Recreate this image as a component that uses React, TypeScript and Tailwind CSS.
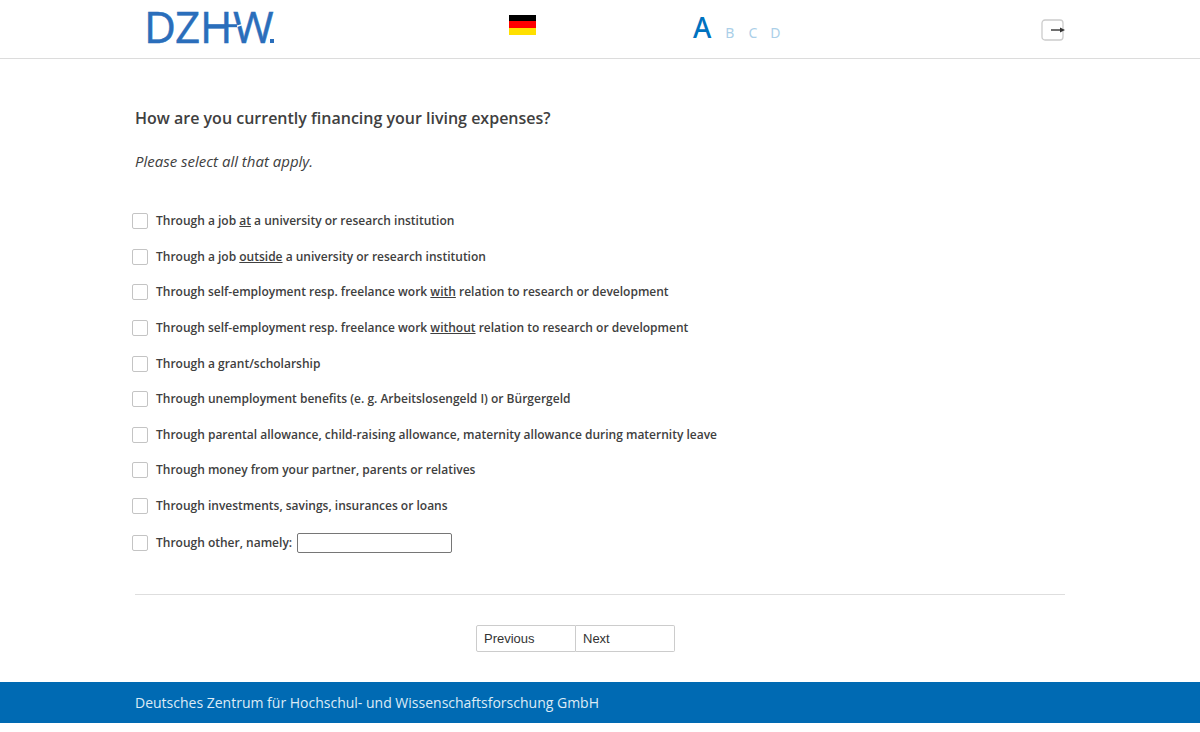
import type { ReactNode } from "react";

const options: { id: string; label: ReactNode }[] = [
  { id: "job-at", label: <>Through a job <u>at</u> a university or research institution</> },
  { id: "job-outside", label: <>Through a job <u>outside</u> a university or research institution</> },
  { id: "self-with", label: <>Through self-employment resp. freelance work <u>with</u> relation to research or development</> },
  { id: "self-without", label: <>Through self-employment resp. freelance work <u>without</u> relation to research or development</> },
  { id: "grant", label: "Through a grant/scholarship" },
  { id: "unemployment", label: "Through unemployment benefits (e. g. Arbeitslosengeld I) or Bürgergeld" },
  { id: "parental", label: "Through parental allowance, child-raising allowance, maternity allowance during maternity leave" },
  { id: "relatives", label: "Through money from your partner, parents or relatives" },
  { id: "investments", label: "Through investments, savings, insurances or loans" },
];

const checkboxClass =
  "h-4 w-4 shrink-0 appearance-none rounded-xs border border-[#c4c4c4] bg-white checked:bg-[#006ab3]";

function Logo() {
  return (
    <svg viewBox="0 0 134 58" className="h-[58px] w-[134px] overflow-visible" role="img" aria-label="DZHW">
      <g fill="#2a6ebb" stroke="#2a6ebb" strokeWidth="0.5" fontFamily="Open Sans, sans-serif" fontSize="44">
        <text x="1" y="43">D</text>
        <text x="32" y="43">Z</text>
        <text x="57" y="43">H</text>
        <text x="90" y="43">W</text>
      </g>
      <rect x="127" y="39" width="4" height="4" fill="#2a6ebb" />
      {/* crossbar running from the H into the W */}
      <path d="M64 25.7h30" stroke="#2a6ebb" strokeWidth="3" />
      <path d="M94 26.2l6-1.8" stroke="#fff" strokeWidth="1.5" />
    </svg>
  );
}

function Option({ id, label }: { id: string; label: ReactNode }) {
  return (
    <li className="flex h-5 items-center gap-2">
      <input id={id} type="checkbox" className={checkboxClass} />
      <label htmlFor={id}>{label}</label>
    </li>
  );
}

export default function App() {
  return (
    <div className="bg-white font-['Open_Sans',sans-serif] text-[#404040]">
      <header className="border-b border-[#dcdcdc]">
        <div className="mx-auto grid h-[58px] max-w-[930px] grid-cols-[374px_184px_1fr_auto] items-start">
          <a href="#" className="ml-2 w-fit">
            <Logo />
          </a>
          <button type="button" aria-label="Deutsch" className="mt-[15px] w-fit">
            <svg viewBox="0 0 27 20" className="h-5 w-[27px]">
              <rect width="27" height="20" fill="#ffe000" />
              <rect width="27" height="13" fill="#f00" />
              <rect width="27" height="6" fill="#000" />
            </svg>
          </button>
          <ol className="mt-[7px] flex items-baseline font-['Noto_Sans',sans-serif] text-sm text-[#abcfe8]">
            <li className="mr-[14px] text-[28px] font-medium leading-10 text-[#0072bf]">A</li>
            <li className="mr-[14px]">B</li>
            <li className="mr-[13px]">C</li>
            <li>D</li>
          </ol>
          <button type="button" aria-label="Exit" className="mt-[19px]">
            <svg viewBox="0 0 24 22" className="h-[22px] w-6">
              <rect x="1" y="1" width="21" height="20" rx="3" fill="none" stroke="#ccc" strokeWidth="1.3" />
              <path d="M10 11h10" stroke="#333" strokeWidth="1.4" />
              <path d="M19 8.5l5 2.5-5 2.5z" fill="#333" />
            </svg>
          </button>
        </div>
      </header>

      <form className="mx-auto max-w-[930px] pb-[30px] pt-[47px]" onSubmit={(e) => e.preventDefault()}>
        <h1 className="text-base font-semibold">How are you currently financing your living expenses?</h1>
        <p className="mt-[19px] text-[15px] leading-6 italic">Please select all that apply.</p>

        {/* boxes hang slightly left of the text column */}
        <div className="-ml-[3px] mt-[38px] text-xs font-semibold">
          <ul className="flex min-h-[305px] flex-col justify-between">
            {options.map((option) => (
              <Option key={option.id} id={option.id} label={option.label} />
            ))}
          </ul>
          <div className="mt-[17px] flex items-center">
            <input id="other" type="checkbox" className={checkboxClass} />
            <label htmlFor="other" className="ml-2 leading-5">Through other, namely:</label>
            <input
              type="text"
              aria-label="Other source"
              className="ml-[5px] h-5 w-[155px] rounded-xs border border-[#767676] px-1 font-normal"
            />
          </div>
        </div>

        <hr className="mt-[41px] border-[#dedede]" />

        <div className="ml-[341px] mt-[30px] flex font-['Liberation_Sans',sans-serif] text-[13px] text-[#333]">
          <button type="submit" className="h-[27px] w-[100px] rounded-l-xs border border-[#ccc] px-[7px] text-left">
            Previous
          </button>
          <button type="submit" className="h-[27px] w-[99px] rounded-r-xs border border-l-0 border-[#ccc] px-[7px] text-left">
            Next
          </button>
        </div>
      </form>

      <footer className="bg-[#006ab3] text-sm text-[#dcebf6]">
        <div className="mx-auto flex h-[41px] max-w-[930px] items-center">
          Deutsches Zentrum für Hochschul- und Wissenschaftsforschung GmbH
        </div>
      </footer>
    </div>
  );
}
